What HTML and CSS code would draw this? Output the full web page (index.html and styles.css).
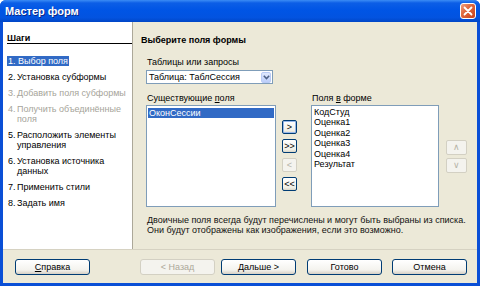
FILE: index.html
```html
<!DOCTYPE html>
<html>
<head>
<meta charset="utf-8">
<link rel="stylesheet" href="styles.css">
</head>
<body>
<div class="window">
  <div class="titlebar">
    <span class="title">Мастер форм</span>
    <span class="close"><svg width="10" height="10" viewBox="0 0 10 10"><path d="M1.5 1.5 L8.5 8.5 M8.5 1.5 L1.5 8.5" stroke="#fff" stroke-width="1.8" stroke-linecap="round"/></svg></span>
  </div>
  <div class="client">
    <div class="main">
      <div class="steps">
        <div class="steps-head">Шаги</div>
        <ul class="step-list">
          <li class="step"><span class="sel">1. Выбор поля</span></li>
          <li class="step"><span class="num">2.</span><span>Установка субформы</span></li>
          <li class="step off"><span class="num">3.</span><span>Добавить поля субформы</span></li>
          <li class="step off"><span class="num">4.</span><span>Получить объединённые поля</span></li>
          <li class="step"><span class="num">5.</span><span>Расположить элементы управления</span></li>
          <li class="step"><span class="num">6.</span><span>Установка источника данных</span></li>
          <li class="step"><span class="num">7.</span><span>Применить стили</span></li>
          <li class="step"><span class="num">8.</span><span>Задать имя</span></li>
        </ul>
      </div>
      <div class="page">
        <div class="page-head">Выберите поля формы</div>
        <div class="content">
          <div class="label lbl-tables">Таблицы или запросы</div>
          <div class="combo">
            <span class="combo-text">Таблица: ТаблСессия</span>
            <span class="combo-btn"><svg width="7" height="5" viewBox="0 0 7 5"><path d="M0.8 0.8 L3.5 3.6 L6.2 0.8" fill="none" stroke="#4d6185" stroke-width="1.5"/></svg></span>
          </div>
          <div class="lists">
            <div class="col col-left">
              <div class="label">Существующие <u>п</u>оля</div>
              <div class="listbox lb-left">
                <div class="item selected">ОконСессии</div>
              </div>
            </div>
            <div class="movebtns">
              <div class="sbtn focus">&gt;</div>
              <div class="sbtn">&gt;&gt;</div>
              <div class="sbtn dis">&lt;</div>
              <div class="sbtn">&lt;&lt;</div>
            </div>
            <div class="col col-right">
              <div class="label">Поля <u>в</u> форме</div>
              <div class="listbox lb-right">
                <div class="item">КодСтуд</div>
                <div class="item">Оценка1</div>
                <div class="item">Оценка2</div>
                <div class="item">Оценка3</div>
                <div class="item">Оценка4</div>
                <div class="item">Результат</div>
              </div>
            </div>
            <div class="updown">
              <div class="ubtn">&#8743;</div>
              <div class="ubtn">&#8744;</div>
            </div>
          </div>
          <div class="note">Двоичные поля всегда будут перечислены и могут быть выбраны из списка.<br>Они будут отображены как изображения, если это возможно.</div>
        </div>
      </div>
    </div>
    <div class="buttonbar">
      <div class="btn b-help"><u>С</u>правка</div>
      <div class="btn b-back dis">&lt; Назад</div>
      <div class="btn b-next">Дальше &gt;</div>
      <div class="btn b-done">Готово</div>
      <div class="btn b-cancel">Отмена</div>
    </div>
  </div>
</div>
</body>
</html>
```
FILE: styles.css
```css
* { box-sizing: border-box; }
html, body { margin: 0; padding: 0; }
body {
  width: 480px;
  height: 286px;
  overflow: hidden;
  font-family: "Liberation Sans", Arial, sans-serif;
  font-size: 9px;
  color: #000;
}
.window {
  width: 480px;
  height: 286px;
  display: flex;
  flex-direction: column;
  background: #0a4fd6;
  border-radius: 6px 6px 0 0;
}
.titlebar {
  height: 22px;
  display: flex;
  align-items: center;
  border-radius: 6px 6px 0 0;
  background: linear-gradient(to bottom, #3b8cf5 0, #0c5ee6 3px, #0055e5 45%, #0353e0 80%, #0046c6 100%);
}
.title {
  margin-left: 5px;
  flex: 1;
  color: #fff;
  font-weight: bold;
  font-size: 11px;
  text-shadow: 1px 1px 0 #0a2a8a;
}
.close {
  width: 16px;
  height: 16px;
  margin-right: 4px;
  border: 1px solid #fff;
  border-radius: 3px;
  background: linear-gradient(135deg, #f0a080 0, #e06a40 40%, #c8401c 100%);
  display: flex;
  align-items: center;
  justify-content: center;
}
.client {
  flex: 1;
  margin: 0 3px 3px 3px;
  background: #ece9d8;
  display: flex;
  flex-direction: column;
}
.main {
  height: 228px;
  display: flex;
  border-bottom: 1px solid #d6d2c2;
}
.steps {
  width: 130px;
  background: #fff;
  border-right: 1px solid #aca899;
  padding: 11px 0 0 4px;
}
.steps-head {
  font-weight: bold;
  line-height: 10px;
  border-bottom: 1px solid #000;
}
.step-list {
  list-style: none;
  margin: 12px 0 0 0;
  padding: 0;
}
.step {
  display: flex;
  line-height: 10px;
  margin-bottom: 6px;
  padding-left: 1px;
}
.step .num { width: 9px; flex: none; }
.step.off { color: #a6a49a; }
.sel {
  background: #316ac5;
  color: #fff;
  margin-left: -1px;
  padding: 0 1px;
}
.page {
  flex: 1;
  padding: 13px 0 0 8px;
}
.page-head {
  font-weight: bold;
  line-height: 10px;
}
.content {
  padding-left: 5px;
}
.label {
  line-height: 10px;
  padding-left: 1px;
}
.lbl-tables { margin-top: 12px; }
.combo {
  margin-top: 3px;
  width: 127px;
  height: 14px;
  background: #fff;
  border: 1px solid #7f9db9;
  display: flex;
  align-items: center;
  padding: 1px;
}
.combo-text { flex: 1; padding-left: 1px; }
.combo-btn {
  width: 10px;
  height: 11px;
  border: 1px solid #b9cbf5;
  border-radius: 2px;
  background: linear-gradient(to bottom, #e0e9fd, #bccefa);
  display: flex;
  align-items: center;
  justify-content: center;
}
.lists {
  display: flex;
  margin-top: 9px;
}
.col .label { margin-bottom: 2px; }
.listbox {
  height: 102px;
  background: #fff;
  border: 1px solid #7f9db9;
  padding: 1px;
}
.lb-left { width: 130px; }
.lb-right { width: 128px; }
.item {
  line-height: 10.4px;
  padding-left: 1px;
}
.item.selected {
  background: #316ac5;
  color: #fff;
  line-height: 10px;
  margin-top: 1px;
}
.movebtns {
  margin: 27px 14px 0 6px;
  display: flex;
  flex-direction: column;
  gap: 5px;
}
.sbtn, .ubtn {
  width: 15px;
  height: 14px;
  border: 1px solid #003c74;
  border-radius: 2px;
  background: linear-gradient(to bottom, #ffffff, #f0efe6 80%, #d8d5c8);
  display: flex;
  align-items: center;
  justify-content: center;
  line-height: 1;
  font-size: 9px;
}
.sbtn.focus {
  box-shadow: inset 0 0 0 1px #98b8ea;
}
.sbtn.dis, .ubtn {
  border-color: #d3d0c3;
  background: #f4f3ee;
  color: #b6b4a8;
}
.updown {
  margin: 47px 0 0 7px;
  display: flex;
  flex-direction: column;
  gap: 3px;
}
.ubtn { width: 21px; height: 15px; }
.note {
  margin-top: 8px;
  line-height: 10px;
  padding-left: 1px;
  white-space: nowrap;
  color: #111;
}
.buttonbar {
  flex: 1;
  display: flex;
  padding: 9px 0 0 12px;
}
.btn {
  width: 75px;
  height: 16px;
  border: 1px solid #003c74;
  border-radius: 3px;
  background: linear-gradient(to bottom, #ffffff, #f4f3ee 70%, #d6d0c5);
  display: flex;
  align-items: center;
  justify-content: center;
  line-height: 1;
}
.btn.dis {
  border-color: #d3d0c3;
  background: #f4f3ee;
  color: #aca899;
}
.b-back { margin-left: 50px; }
.b-next { margin-left: 6px; }
.b-done { margin-left: 11px; }
.b-cancel { margin-left: 10px; }
```
